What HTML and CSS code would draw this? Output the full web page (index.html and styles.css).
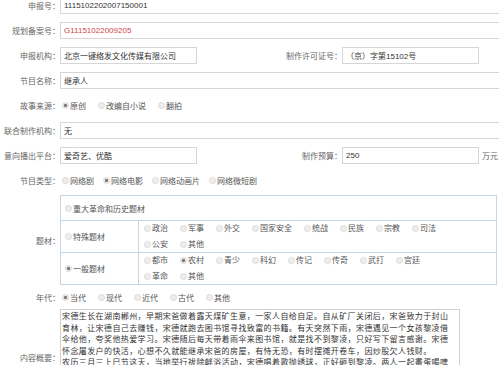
FILE: index.html
```html
<!DOCTYPE html>
<html lang="zh-CN">
<head>
    <meta charset="UTF-8">
    <meta name="viewport" content="width=device-width, initial-scale=1.0">
    <title>节目备案信息</title>
    <link rel="stylesheet" href="styles.css">
</head>
<body>

    <form class="form">
        <div class="row">
            <label class="lbl">申报号：</label>
            <input class="ipt ipt-full" type="text" value="1115102202007150001">
        </div>
        <div class="row">
            <label class="lbl">规划备案号：</label>
            <input class="ipt ipt-full red" type="text" value="G11151022009205">
        </div>
        <div class="row">
            <label class="lbl">申报机构：</label>
            <input class="ipt ipt-half" type="text" value="北京一键络发文化传媒有限公司">
            <label class="lbl lbl-mid">制作许可证号：</label>
            <input class="ipt ipt-half" type="text" value="（京）字第15102号">
        </div>
        <div class="row">
            <label class="lbl">节目名称：</label>
            <input class="ipt ipt-full" type="text" value="继承人">
        </div>
        <div class="row">
            <label class="lbl">故事来源：</label>
            <div class="opts">
                <label class="opt"><input type="radio" name="source" checked>原创</label>
                <label class="opt"><input type="radio" name="source">改编自小说</label>
                <label class="opt"><input type="radio" name="source">翻拍</label>
            </div>
        </div>
        <div class="row">
            <label class="lbl">联合制作机构：</label>
            <input class="ipt ipt-full" type="text" value="无">
        </div>
        <div class="row">
            <label class="lbl">意向播出平台：</label>
            <input class="ipt ipt-half" type="text" value="爱奇艺、优酷">
            <label class="lbl lbl-mid">制作预算：</label>
            <input class="ipt ipt-half" type="text" value="250">
            <span class="unit">万元</span>
        </div>
        <div class="row">
            <label class="lbl">节目类型：</label>
            <div class="opts opts-tight">
                <label class="opt"><input type="radio" name="type">网络剧</label>
                <label class="opt"><input type="radio" name="type" checked>网络电影</label>
                <label class="opt"><input type="radio" name="type">网络动画片</label>
                <label class="opt"><input type="radio" name="type">网络微短剧</label>
            </div>
        </div>

        <div class="row row-theme">
            <label class="lbl">题材：</label>
            <table class="theme">
                <tr class="theme-top">
                    <td colspan="2"><label class="opt"><input type="radio" name="theme">重大革命和历史题材</label></td>
                </tr>
                <tr class="theme-special">
                    <td class="cat"><label class="opt"><input type="radio" name="theme">特殊题材</label></td>
                    <td>
                        <div class="opts opts-sub">
                            <label class="opt"><input type="radio" name="special">政治</label>
                            <label class="opt"><input type="radio" name="special">军事</label>
                            <label class="opt"><input type="radio" name="special">外交</label>
                            <label class="opt"><input type="radio" name="special">国家安全</label>
                            <label class="opt"><input type="radio" name="special">统战</label>
                            <label class="opt"><input type="radio" name="special">民族</label>
                            <label class="opt"><input type="radio" name="special">宗教</label>
                            <label class="opt"><input type="radio" name="special">司法</label>
                            <label class="opt"><input type="radio" name="special">公安</label>
                            <label class="opt"><input type="radio" name="special">其他</label>
                        </div>
                    </td>
                </tr>
                <tr class="theme-general">
                    <td class="cat"><label class="opt"><input type="radio" name="theme" checked>一般题材</label></td>
                    <td>
                        <div class="opts opts-sub">
                            <label class="opt"><input type="radio" name="general">都市</label>
                            <label class="opt"><input type="radio" name="general" checked>农村</label>
                            <label class="opt"><input type="radio" name="general">青少</label>
                            <label class="opt"><input type="radio" name="general">科幻</label>
                            <label class="opt"><input type="radio" name="general">传记</label>
                            <label class="opt"><input type="radio" name="general">传奇</label>
                            <label class="opt"><input type="radio" name="general">武打</label>
                            <label class="opt"><input type="radio" name="general">宫廷</label>
                            <label class="opt"><input type="radio" name="general">革命</label>
                            <label class="opt"><input type="radio" name="general">其他</label>
                        </div>
                    </td>
                </tr>
            </table>
        </div>

        <div class="row row-era">
            <label class="lbl">年代：</label>
            <div class="opts">
                <label class="opt"><input type="radio" name="era" checked>当代</label>
                <label class="opt"><input type="radio" name="era">现代</label>
                <label class="opt"><input type="radio" name="era">近代</label>
                <label class="opt"><input type="radio" name="era">古代</label>
                <label class="opt"><input type="radio" name="era">其他</label>
            </div>
        </div>
        <div class="row row-text">
            <label class="lbl">内容概要：</label>
            <textarea class="summary">宋德生长在湖南郴州，早期宋爸做着露天煤矿生意，一家人自给自足。自从矿厂关闭后，宋爸致力于封山
育林，让宋德自己去赚钱，宋德就跑去图书馆寻找致富的书籍。有天突然下雨，宋德遇见一个女孩黎凌借
伞给他，夸奖他热爱学习。宋德随后每天带着雨伞来图书馆，就是找不到黎凌，只好写下留言感谢。宋德
怀念屠发户的快活，心想不久就能继承宋爸的房屋，有恃无恐，有时摆摊开卷车，因炒股欠人钱财。
农历三月三上巳节这天，当地举行祓除衅浴活动，宋德唱着歌抛绣球，正好砸到黎凌。两人一起畫蛋喝啤
酒，黎凌说起自己在城里读书的经历，宋德心生向往，决定跟着她一起去城里闯一闯。宋爸得知后大发雷
霆，认为宋德不务正业，要他留在山里看守林子。宋德不服气，连夜收拾行李离开了家。
到了城里，宋德才发现生活远没有想象中那么简单，找工作处处碰壁，只好在工地上搬砖度日。黎凌得知
后四处帮他打听机会，终于为他在一家书店找到了一份工作。宋德白天卖书，晚上自学，慢慢有了起色。
一年后，宋爸突然病倒，宋德赶回老家，才知道宋爸这些年一直在默默为他攒钱。宋德悔恨不已，决定留
在家乡，用自己学到的知识带领乡亲们发展林下经济，真正继承宋爸留下的这片青山。
</textarea>
        </div>
    </form>

</body>
</html>
```

FILE: styles.css
```css
* {
    margin: 0;
    padding: 0;
    box-sizing: border-box;
}
html, body {
    width: 100%;
    height: 100%;
    overflow: hidden;
}
body {
    background: #fff;
    font-family: "Liberation Sans", "Noto Sans CJK SC", sans-serif;
    font-size: 8px;
    color: #666;
}

.form {
    width: 540px;
    margin-top: -7px;
}
.row {
    display: flex;
    align-items: center;
    height: 25px;
}
.lbl {
    flex: none;
    width: 60px;
    text-align: right;
    white-space: nowrap;
}
.lbl-mid {
    width: 145px;
}

.ipt {
    flex: none;
    height: 17px;
    border: 1px solid #d6d6d6;
    padding: 0 3px;
    font: inherit;
    color: #333;
    background: #fff;
    outline: none;
}
.ipt-full {
    width: 470px;
}
.ipt-half {
    width: 137px;
}
.red {
    color: #d24545;
}
.unit {
    margin-left: 3px;
    white-space: nowrap;
}

/* radios */
.opts {
    display: flex;
    flex-wrap: wrap;
    align-items: center;
    padding-left: 2px;
}
.opt {
    display: flex;
    align-items: center;
    margin-right: 12px;
    white-space: nowrap;
    color: #555;
}
.opts-tight .opt {
    margin-right: 9px;
}
.opt input {
    -webkit-appearance: none;
    appearance: none;
    flex: none;
    width: 7px;
    height: 7px;
    margin-right: 1px;
    border: 1px solid #dadada;
    border-radius: 50%;
    background: #eee;
}
.opt input:checked {
    background: radial-gradient(circle, #7a7a7a 0 1.3px, #e6e6e6 1.8px);
}

/* subject table */
.row-theme {
    height: auto;
    margin-top: 2px;
}
.theme {
    width: 437px;
    border-collapse: collapse;
}
.theme td {
    border: 1px solid #c4d6e5;
    padding: 0 0 0 4px;
    vertical-align: middle;
}
.theme .cat {
    width: 78px;
}
.theme-top td {
    height: 25px;
}
.theme-special td {
    height: 31px;
}
.theme-general td {
    height: 30px;
}
.opts-sub {
    max-width: 320px;
    line-height: 15.5px;
    padding-left: 1px;
}
.row-era {
    height: 24px;
}

/* summary */
.row-text {
    height: auto;
}
.summary {
    flex: none;
    width: 400px;
    height: 96px;
    border: 1px solid #d0d0d0;
    padding: 0 1px;
    font-size: 8px;
    letter-spacing: 0.4px;
    line-height: 11.5px;
    color: #333;
    font-family: "Noto Sans CJK SC", sans-serif;
    white-space: pre;
    resize: none;
    overflow-y: scroll;
    overflow-x: hidden;
    outline: none;
}
.summary::-webkit-scrollbar {
    width: 9px;
}
.summary::-webkit-scrollbar-track {
    background: #f0f0f0;
}
.summary::-webkit-scrollbar-thumb {
    background: #cdcdcd;
}
.summary::-webkit-scrollbar-button:vertical:single-button {
    height: 8px;
    background: #f0f0f0;
}
```
